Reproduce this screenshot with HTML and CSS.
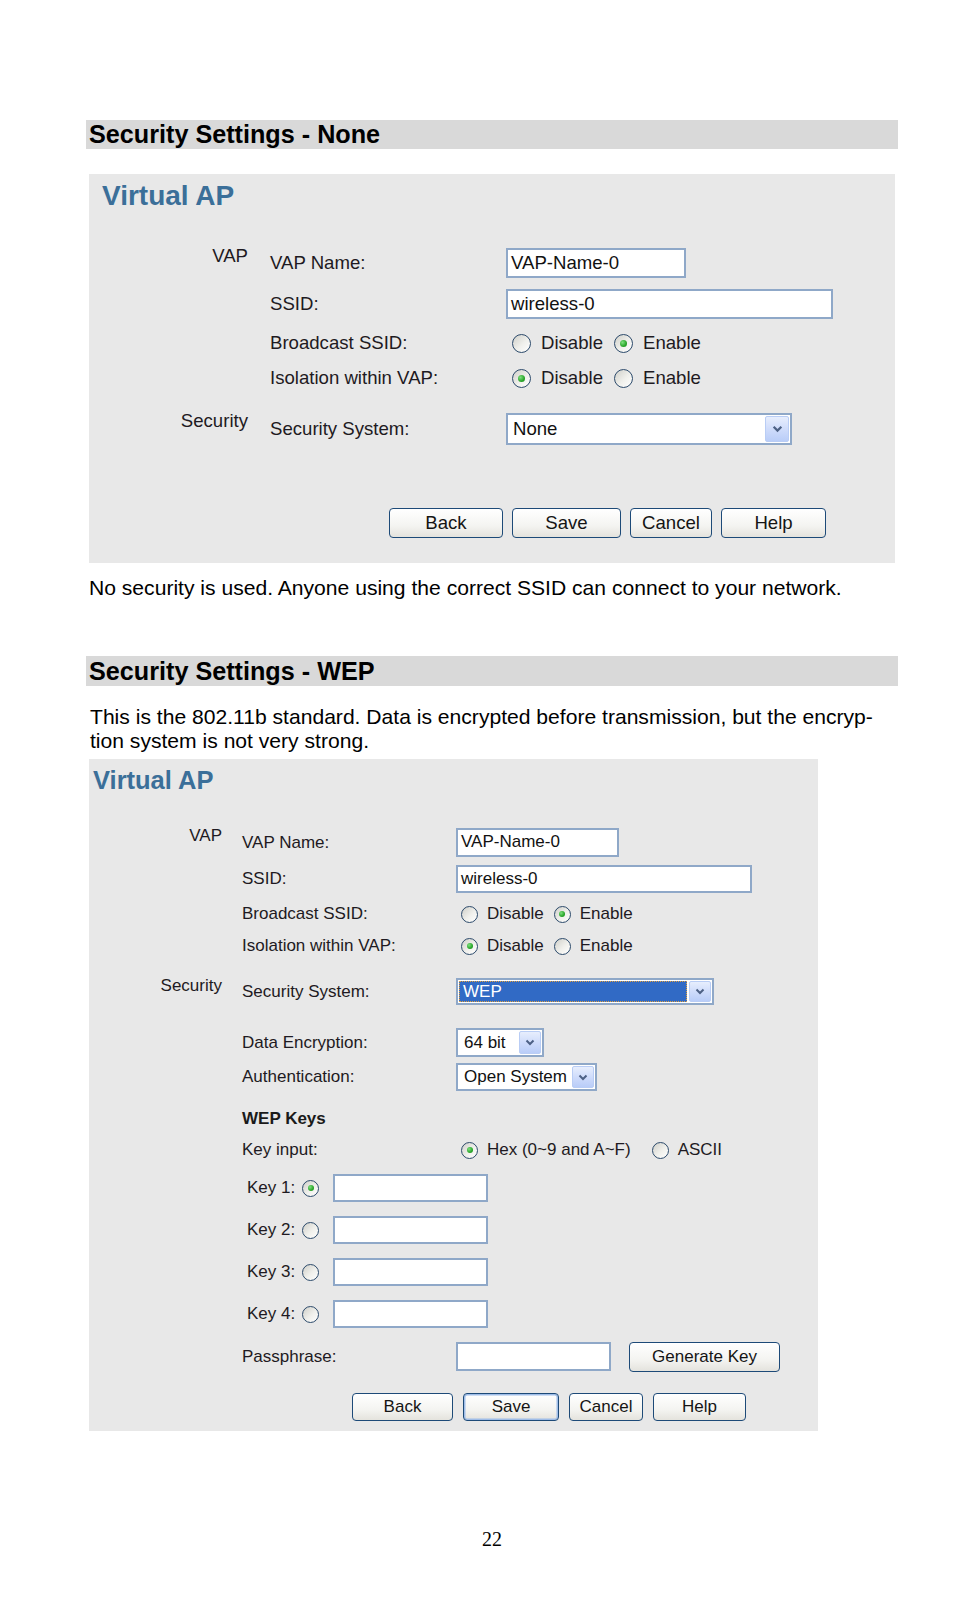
FILE: index.html
```html
<!DOCTYPE html>
<html>
<head>
<meta charset="utf-8">
<link rel="stylesheet" href="styles.css">
</head>
<body>
<div class="page">
  <div class="sec-head">Security Settings - None</div>

  <div class="panel p1">
    <div class="title">Virtual AP</div>
    <div class="row rA"><div class="grp">VAP</div><div class="lbl">VAP Name:</div><div class="ctl"><span class="tbox w-name">VAP-Name-0</span></div></div>
    <div class="row rB"><div class="grp"></div><div class="lbl">SSID:</div><div class="ctl"><span class="tbox w-ssid">wireless-0</span></div></div>
    <div class="row rC"><div class="grp"></div><div class="lbl">Broadcast SSID:</div><div class="ctl"><span class="radio"></span><span class="rtext r1">Disable</span><span class="radio on"></span><span class="rtext">Enable</span></div></div>
    <div class="row rD"><div class="grp"></div><div class="lbl">Isolation within VAP:</div><div class="ctl"><span class="radio on"></span><span class="rtext r1">Disable</span><span class="radio"></span><span class="rtext">Enable</span></div></div>
    <div class="row rE"><div class="grp">Security</div><div class="lbl">Security System:</div><div class="ctl"><span class="sel w-sec"><span class="seltext">None</span><span class="arrow"><svg viewBox="0 0 10 7"><path d="M1.5 1.5 L5 5 L8.5 1.5" fill="none" stroke="#4d6185" stroke-width="2"/></svg></span></span></div></div>
    <div class="btnrow">
      <span class="btn b-back">Back</span><span class="btn b-save">Save</span><span class="btn b-cancel">Cancel</span><span class="btn b-help">Help</span>
    </div>
  </div>

  <p class="text t1">No security is used. Anyone using the correct SSID can connect to your network.</p>

  <div class="sec-head h2">Security Settings - WEP</div>

  <p class="text t2">This is the 802.11b standard. Data is encrypted before transmission, but the encryp-<br>tion system is not very strong.</p>

  <div class="panel p2">
    <div class="title">Virtual AP</div>
    <div class="row rA"><div class="grp">VAP</div><div class="lbl">VAP Name:</div><div class="ctl"><span class="tbox w-name">VAP-Name-0</span></div></div>
    <div class="row rB"><div class="grp"></div><div class="lbl">SSID:</div><div class="ctl"><span class="tbox w-ssid">wireless-0</span></div></div>
    <div class="row rC"><div class="grp"></div><div class="lbl">Broadcast SSID:</div><div class="ctl"><span class="radio"></span><span class="rtext r1">Disable</span><span class="radio on"></span><span class="rtext">Enable</span></div></div>
    <div class="row rD"><div class="grp"></div><div class="lbl">Isolation within VAP:</div><div class="ctl"><span class="radio on"></span><span class="rtext r1">Disable</span><span class="radio"></span><span class="rtext">Enable</span></div></div>
    <div class="row rE"><div class="grp">Security</div><div class="lbl">Security System:</div><div class="ctl"><span class="sel w-sec focus"><span class="seltext hl">WEP</span><span class="arrow"><svg viewBox="0 0 10 7"><path d="M1.5 1.5 L5 5 L8.5 1.5" fill="none" stroke="#4d6185" stroke-width="2"/></svg></span></span></div></div>
    <div class="row rF"><div class="grp"></div><div class="lbl">Data Encryption:</div><div class="ctl"><span class="sel w-enc"><span class="seltext">64 bit</span><span class="arrow"><svg viewBox="0 0 10 7"><path d="M1.5 1.5 L5 5 L8.5 1.5" fill="none" stroke="#4d6185" stroke-width="2"/></svg></span></span></div></div>
    <div class="row rG"><div class="grp"></div><div class="lbl">Authentication:</div><div class="ctl"><span class="sel w-auth"><span class="seltext">Open System</span><span class="arrow"><svg viewBox="0 0 10 7"><path d="M1.5 1.5 L5 5 L8.5 1.5" fill="none" stroke="#4d6185" stroke-width="2"/></svg></span></span></div></div>
    <div class="row rH"><div class="grp"></div><div class="lbl bold">WEP Keys</div></div>
    <div class="row rI"><div class="grp"></div><div class="lbl">Key input:</div><div class="ctl"><span class="radio on"></span><span class="rtext hex">Hex (0~9 and A~F)</span><span class="radio"></span><span class="rtext">ASCII</span></div></div>
    <div class="row key k1"><div class="grp"></div><span class="keylbl">Key 1:</span><span class="radio on"></span><span class="tbox w-key"></span></div>
    <div class="row key"><div class="grp"></div><span class="keylbl">Key 2:</span><span class="radio"></span><span class="tbox w-key"></span></div>
    <div class="row key"><div class="grp"></div><span class="keylbl">Key 3:</span><span class="radio"></span><span class="tbox w-key"></span></div>
    <div class="row key"><div class="grp"></div><span class="keylbl">Key 4:</span><span class="radio"></span><span class="tbox w-key"></span></div>
    <div class="row rP"><div class="grp"></div><div class="lbl">Passphrase:</div><div class="ctl"><span class="tbox w-pass"></span><span class="btn b-gen">Generate Key</span></div></div>
    <div class="btnrow">
      <span class="btn b-back">Back</span><span class="btn b-save default">Save</span><span class="btn b-cancel">Cancel</span><span class="btn b-help">Help</span>
    </div>
  </div>

  <div class="pageno">22</div>
</div>
</body>
</html>
```

FILE: styles.css
```css
html, body {
  margin: 0;
  padding: 0;
  background: #ffffff;
}
.page {
  width: 954px;
  padding-top: 120px;
  font-family: "Liberation Sans", Arial, sans-serif;
  color: #000;
}
.sec-head {
  margin-left: 86px;
  width: 809px;
  height: 29px;
  line-height: 29px;
  padding-left: 3px;
  background: #d9d9d9;
  font-weight: bold;
  font-size: 25.2px;
  color: #000;
}
.sec-head.h2 {
  margin-top: 56px;
  height: 30px;
  line-height: 30px;
}
.text {
  margin: 0 0 0 89px;
  font-size: 21.1px;
  line-height: 24px;
  white-space: nowrap;
}
.t1 { margin-top: 13px; }
.t2 { margin-top: 19px; margin-left: 90px; }

.panel {
  margin-left: 89px;
  background: #e8e8e8;
  color: #1e1a22;
  box-sizing: border-box;
}
.p1 {
  margin-top: 25px;
  width: 806px;
  padding: 8px 0 25px 0;
  font-size: 18.6px;
  --gw: 159px;
  --gap: 22px;
  --lw: 236px;
  --rd: 19px;
}
.p2 {
  margin-top: 6px;
  width: 729px;
  padding: 9px 0 10px 0;
  font-size: 17px;
  --gw: 133px;
  --gap: 20px;
  --lw: 214px;
  --rd: 17px;
}
.title {
  font-weight: bold;
  color: #3b6f99;
  white-space: nowrap;
}
.p1 .title { font-size: 28px; line-height: 27px; padding-left: 13px; }
.p2 .title { font-size: 25.5px; line-height: 25px; padding-left: 4px; }

.row {
  display: flex;
  align-items: center;
  white-space: nowrap;
}
.grp {
  width: var(--gw);
  flex: none;
  text-align: right;
  align-self: flex-start;
  margin-top: -3px;
  line-height: 22px;
}
.p2 .grp { line-height: 20px; margin-top: -2px; }
.lbl {
  margin-left: var(--gap);
  width: var(--lw);
  flex: none;
  line-height: 22px;
}
.lbl.bold { font-weight: bold; color: #1a1a1a; }
.ctl {
  display: flex;
  align-items: center;
  height: 100%;
}

/* panel 1 rows */
.p1 .rA { height: 30px; margin-top: 39px; }
.p1 .rB { height: 30px; margin-top: 11px; }
.p1 .rC { height: 30px; margin-top: 9px; }
.p1 .rD { height: 30px; margin-top: 5px; }
.p1 .rE { height: 32px; margin-top: 20px; }

/* panel 2 rows */
.p2 .rA { height: 29px; margin-top: 35px; }
.p2 .rB { height: 28px; margin-top: 8px; }
.p2 .rC { height: 28px; margin-top: 7px; }
.p2 .rD { height: 28px; margin-top: 4px; }
.p2 .rE { height: 27px; margin-top: 18px; }
.p2 .rF { height: 29px; margin-top: 23px; }
.p2 .rG { height: 28px; margin-top: 6px; }
.p2 .rH { height: 22px; margin-top: 17px; }
.p2 .rI { height: 28px; margin-top: 6px; }
.p2 .key { height: 28px; margin-top: 14px; }
.p2 .key.k1 { margin-top: 10px; }
.p2 .rP { height: 29px; margin-top: 14px; }

/* text boxes */
.tbox {
  display: block;
  box-sizing: border-box;
  height: 100%;
  background: #ffffff;
  border: 2px solid #8fa8c8;
  color: #111;
  padding-left: 3px;
  line-height: 26px;
  flex: none;
}
.p2 .tbox { line-height: 24px; }
.p1 .w-name { width: 180px; }
.p1 .w-ssid { width: 327px; }
.p2 .w-name { width: 163px; }
.p2 .w-ssid { width: 296px; }
.w-key { width: 155px; margin-left: 14px; }
.w-pass { width: 155px; }

/* radios */
.radio {
  display: block;
  flex: none;
  width: var(--rd);
  height: var(--rd);
  box-sizing: border-box;
  border-radius: 50%;
  border: 1.8px solid #2c4a6b;
  background: linear-gradient(135deg, #cfcfc9 0%, #f0f0ec 55%, #ffffff 100%);
  position: relative;
}
.radio.on::after {
  content: "";
  position: absolute;
  left: 50%;
  top: 50%;
  width: 7px;
  height: 7px;
  margin: -3.5px 0 0 -3.5px;
  border-radius: 50%;
  background: radial-gradient(circle at 35% 35%, #7ee07e 0%, #2aa62a 60%, #1a8a1a 100%);
}
.p2 .radio.on::after { width: 6px; height: 6px; margin: -3px 0 0 -3px; }
.ctl > .radio:first-child { margin-left: 6px; }
.p2 .ctl > .radio:first-child { margin-left: 5px; }
.rtext { margin-left: 10px; }
.p2 .rtext { margin-left: 9px; }
.rtext.r1 { margin-right: 11px; }
.p2 .rtext.r1 { margin-right: 10px; }
.rtext.hex { margin-right: 21px; }

/* selects */
.sel {
  display: flex;
  align-items: stretch;
  box-sizing: border-box;
  height: 100%;
  background: #ffffff;
  border: 2px solid #8fa8c8;
  padding: 1px;
  flex: none;
}
.seltext {
  flex: 1;
  padding-left: 4px;
  display: flex;
  align-items: center;
  color: #111;
}
.seltext.hl {
  background: #316ac5;
  color: #ffffff;
  outline: 1px dotted #e0a040;
  outline-offset: -1px;
  margin-right: 2px;
}
.arrow {
  flex: none;
  width: 24px;
  box-sizing: border-box;
  border: 1px solid #b9cdf5;
  border-radius: 2px;
  background: linear-gradient(180deg, #e7eefd 0%, #cfdcfb 50%, #b9cdf8 100%);
  display: flex;
  align-items: center;
  justify-content: center;
}
.arrow svg { width: 11px; height: 8px; }
.p2 .arrow { width: 22px; }
.p2 .arrow svg { width: 10px; height: 7px; }
.p1 .w-sec { width: 286px; }
.p2 .w-sec { width: 258px; }
.w-enc { width: 88px; }
.w-auth { width: 141px; }
.p2 .w-auth .seltext { padding-left: 5px; }
.p2 .w-enc .seltext { padding-left: 5px; }

/* key rows */
.keylbl {
  margin-left: 25px;
  width: 55px;
  flex: none;
}

/* buttons */
.btnrow {
  display: flex;
  white-space: nowrap;
}
.p1 .btnrow { margin-top: 63px; height: 30px; padding-left: 300px; }
.p2 .btnrow { margin-top: 22px; height: 28px; padding-left: 263px; }
.btn {
  display: flex;
  align-items: center;
  justify-content: center;
  box-sizing: border-box;
  height: 100%;
  border: 1.5px solid #1d4a78;
  border-radius: 4px;
  background: linear-gradient(180deg, #ffffff 0%, #f4f4f1 60%, #e4e3dd 100%);
  color: #151515;
  flex: none;
}
.p1 .btnrow .btn { margin-right: 9px; }
.p2 .btnrow .btn { margin-right: 10px; }
.p1 .b-back { width: 114px; }
.p1 .b-save { width: 109px; }
.p1 .b-cancel { width: 82px; }
.p1 .b-help { width: 105px; }
.p2 .b-back { width: 101px; }
.p2 .b-save { width: 96px; }
.p2 .b-cancel { width: 74px; }
.p2 .b-help { width: 93px; }
.btn.default { box-shadow: inset 0 0 0 1.5px #9fbde8; }
.b-gen { width: 151px; height: 30px; margin-left: 18px; }

.pageno {
  margin-top: 96px;
  padding-left: 482px;
  font-family: "Liberation Serif", "Times New Roman", serif;
  font-size: 20px;
  line-height: 24px;
  color: #000;
}
```
